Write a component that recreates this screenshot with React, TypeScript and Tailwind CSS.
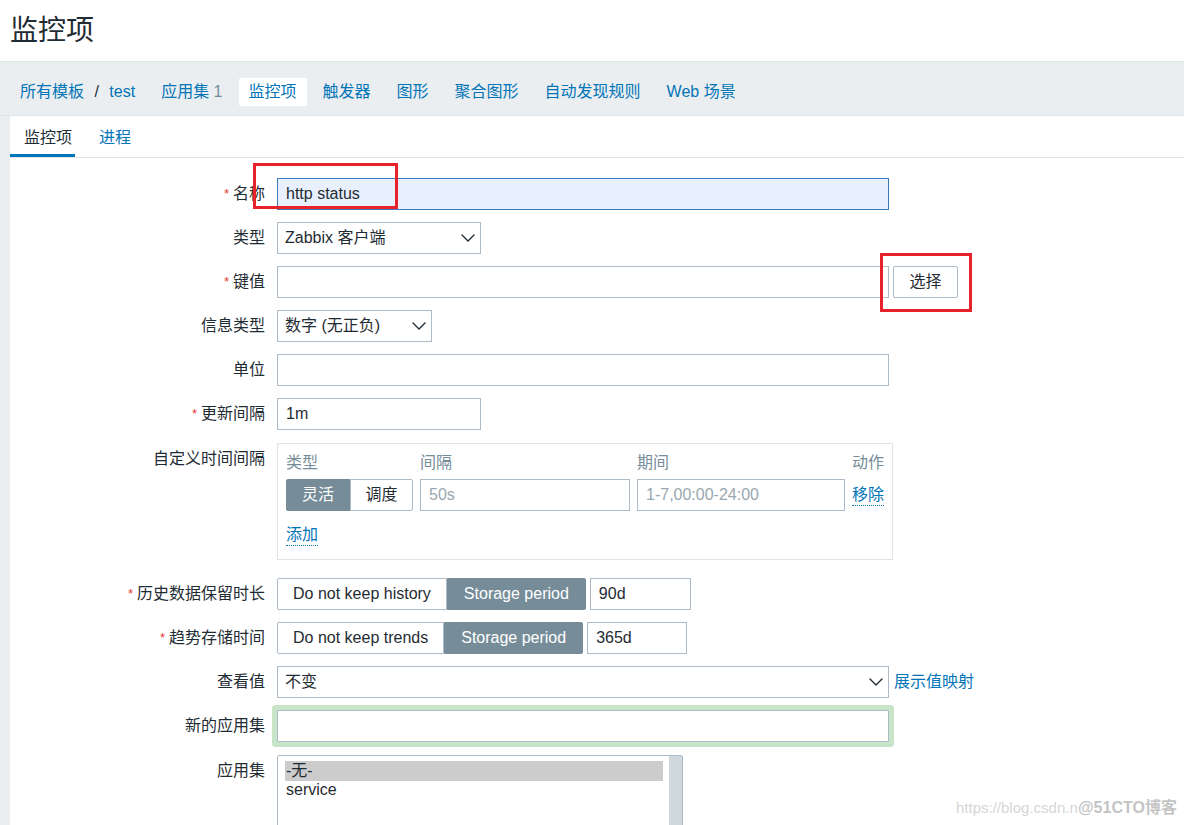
import React from "react";
import { ChevronDown } from "lucide-react";

const font = "font-['Liberation_Sans','Noto_Sans_CJK_SC',sans-serif]";

const Label = ({ text, required }: { text: string; required?: boolean }) => (
  <div className="w-[255px] shrink-0 text-right text-[16px] leading-[20px] text-[#1f2c33]">
    {required && <span className="text-[13px] text-[#e33734] mr-[4px] align-top">*</span>}
    {text}
  </div>
);

const Select = ({ value, width }: { value: string; width: string }) => (
  <div
    className={`relative h-[32px] ${width} border border-[#acbbc7] bg-white flex items-center px-[7px] text-[16px] text-[#1f2c33]`}
  >
    {value}
    <ChevronDown size={24} strokeWidth={1.4} className="absolute right-0 top-[3px] text-[#1f2c33]" />
  </div>
);

const Input = ({ value, width, placeholder }: { value?: string; width: string; placeholder?: string }) => (
  <div
    className={`h-[32px] ${width} border border-[#acbbc7] bg-white flex items-center px-[8px] text-[16px] ${
      value ? "text-[#1f2c33]" : "text-[#9aa7b0]"
    }`}
  >
    {value || placeholder}
  </div>
);

const Segmented = ({ items, active }: { items: string[]; active: number }) => (
  <div className="flex h-[32px]">
    {items.map((it, i) => (
      <div
        key={it}
        className={`flex items-center justify-center text-[16px] border ${
          i === active
            ? "px-[16px] bg-[#768d99] border-[#768d99] text-white"
            : "px-[15px] bg-white border-[#acbbc7] text-[#1f2c33]"
        } ${i === 0 ? "rounded-l-[2px]" : ""} ${i === items.length - 1 ? "rounded-r-[2px]" : ""}`}
      >
        {it}
      </div>
    ))}
  </div>
);

const Row = ({ children, className = "" }: { children: React.ReactNode; className?: string }) => (
  <div className={`flex items-center gap-[12px] ${className}`}>{children}</div>
);

const navItems = ["触发器", "图形", "聚合图形", "自动发现规则", "Web 场景"];

const App = () => {
  return (
    <div className={`relative h-[825px] overflow-hidden bg-[#ebeef0] ${font}`}>
      <header className="h-[61px] bg-white flex items-center pl-[10px]">
        <h1 className="text-[28px] text-[#1f2c33]">监控项</h1>
      </header>

      <nav className="h-[55px] border-y border-[#dfe4e7] flex items-center pt-[6px] pl-[10px] gap-[6px] text-[16px] leading-[20px]">
        <div className="px-[10px] text-[#0275b8]">
          所有模板 <span className="text-[#1f2c33] mx-[6px]">/</span> test
        </div>
        <div className="px-[10px] text-[#0275b8]">
          应用集 <span className="text-[#768d99]">1</span>
        </div>
        <div className="px-[10px] h-[28px] flex items-center bg-white rounded-[2px] text-[#0275b8]">监控项</div>
        {navItems.map((n) => (
          <div key={n} className="px-[10px] text-[#0275b8]">
            {n}
          </div>
        ))}
      </nav>

      <div className="ml-[10px] bg-white h-full">
        <div className="flex gap-[10px] border-b border-[#dfe4e7] h-[42px] text-[16px]">
          <div className="h-[41px] pl-[14px] pr-[3px] pt-[5px] flex items-center border-b-[3px] border-[#0275b8] text-[#1f2c33]">
            监控项
          </div>
          <div className="h-[41px] pl-[14px] pr-[3px] pt-[5px] flex items-center border-b-[3px] border-transparent text-[#0275b8]">
            进程
          </div>
        </div>

        <div className="flex flex-col gap-[12px] pt-[20px]">
          <Row>
            <Label text="名称" required />
            <div className="h-[32px] w-[612px] border border-[#3b7cbf] bg-[#e8f0fe] flex items-center px-[8px] text-[16px] text-[#1f2c33]">
              http status
            </div>
          </Row>
          <Row>
            <Label text="类型" />
            <Select value="Zabbix 客户端" width="w-[204px]" />
          </Row>
          <Row>
            <Label text="键值" required />
            <div className="flex items-center gap-[4px]">
              <Input width="w-[612px]" />
              <button className="h-[32px] w-[65px] border border-[#acbbc7] rounded-[2px] bg-white text-[16px] text-[#1f2c33]">
                选择
              </button>
            </div>
          </Row>
          <Row>
            <Label text="信息类型" />
            <Select value="数字 (无正负)" width="w-[155px]" />
          </Row>
          <Row>
            <Label text="单位" />
            <Input width="w-[612px]" />
          </Row>
          <Row>
            <Label text="更新间隔" required />
            <Input value="1m" width="w-[204px]" />
          </Row>
          <div className="flex items-start gap-[12px] mt-[1px]">
            <div className="pt-[6px]">
              <Label text="自定义时间间隔" />
            </div>
            <div className="w-[616px] h-[117px] border border-[#dfe4e7] pl-[8px] pt-[9px]">
              <div className="grid grid-cols-[127px_210px_208px_auto] gap-x-[7px] text-[16px] leading-[20px] text-[#768d99]">
                <div>类型</div>
                <div>间隔</div>
                <div>期间</div>
                <div>动作</div>
              </div>
              <div className="grid grid-cols-[127px_210px_208px_auto] gap-x-[7px] mt-[6px] items-center">
                <div className="flex h-[32px] text-[16px]">
                  <div className="w-[64px] flex items-center justify-center bg-[#768d99] text-white rounded-l-[2px]">
                    灵活
                  </div>
                  <div className="flex-1 flex items-center justify-center border border-[#acbbc7] rounded-r-[2px] text-[#1f2c33]">
                    调度
                  </div>
                </div>
                <Input placeholder="50s" width="w-[210px]" />
                <Input placeholder="1-7,00:00-24:00" width="w-[208px]" />
                <div className="text-[16px] leading-[20px] text-[#0275b8] border-b border-dotted border-[#0275b8] w-fit">
                  移除
                </div>
              </div>
              <div className="mt-[14px] text-[16px] leading-[20px] text-[#0275b8] border-b border-dotted border-[#0275b8] w-fit">
                添加
              </div>
            </div>
          </div>
          <Row className="mt-[6px]">
            <Label text="历史数据保留时长" required />
            <div className="flex gap-[4px]">
              <Segmented items={["Do not keep history", "Storage period"]} active={1} />
              <Input value="90d" width="w-[101px]" />
            </div>
          </Row>
          <Row>
            <Label text="趋势存储时间" required />
            <div className="flex gap-[4px]">
              <Segmented items={["Do not keep trends", "Storage period"]} active={1} />
              <Input value="365d" width="w-[100px]" />
            </div>
          </Row>
          <Row>
            <Label text="查看值" />
            <div className="flex items-center gap-[5px]">
              <Select value="不变" width="w-[612px]" />
              <span className="text-[16px] text-[#0275b8]">展示值映射</span>
            </div>
          </Row>
          <Row>
            <Label text="新的应用集" />
            <div className="h-[32px] w-[612px] border border-[#acbbc7] bg-white rounded-[1px] shadow-[0_0_0_5px_#c8e5c9]" />
          </Row>
          <div className="flex items-start gap-[12px] mt-[1px]">
            <div className="pt-[6px]">
              <Label text="应用集" />
            </div>
            <div className="w-[406px] h-[160px] border border-[#acbbc7] rounded-[2px] flex">
              <div className="flex-1 pl-[7px] pr-[6px] pt-[5px] text-[16px] leading-[18px] text-[#1f2c33]">
                <div className="bg-[#cccccc] h-[20px] flex items-center pl-[1px]">-无-</div>
                <div className="pl-[1px]">service</div>
              </div>
              <div className="w-[13px] bg-[#cfd8dd]" />
            </div>
          </div>
        </div>
      </div>

      {/* annotations */}
      <div className="absolute left-[253px] top-[163px] w-[145px] h-[46px] border-[3px] border-[#e8222a]" />
      <div className="absolute left-[880px] top-[253px] w-[92px] h-[59px] border-[3px] border-[#e8222a]" />

      {/* watermark */}
      <div className="absolute left-[956px] top-[797px] text-[15px] text-[#d6d6d6] whitespace-nowrap">
        https://blog.csdn.n
      </div>
      <div className="absolute left-[1078px] top-[796px] text-[16px] font-bold text-[#c4c4c4] whitespace-nowrap">
        @51CTO博客
      </div>
    </div>
  );
};

export default App;
